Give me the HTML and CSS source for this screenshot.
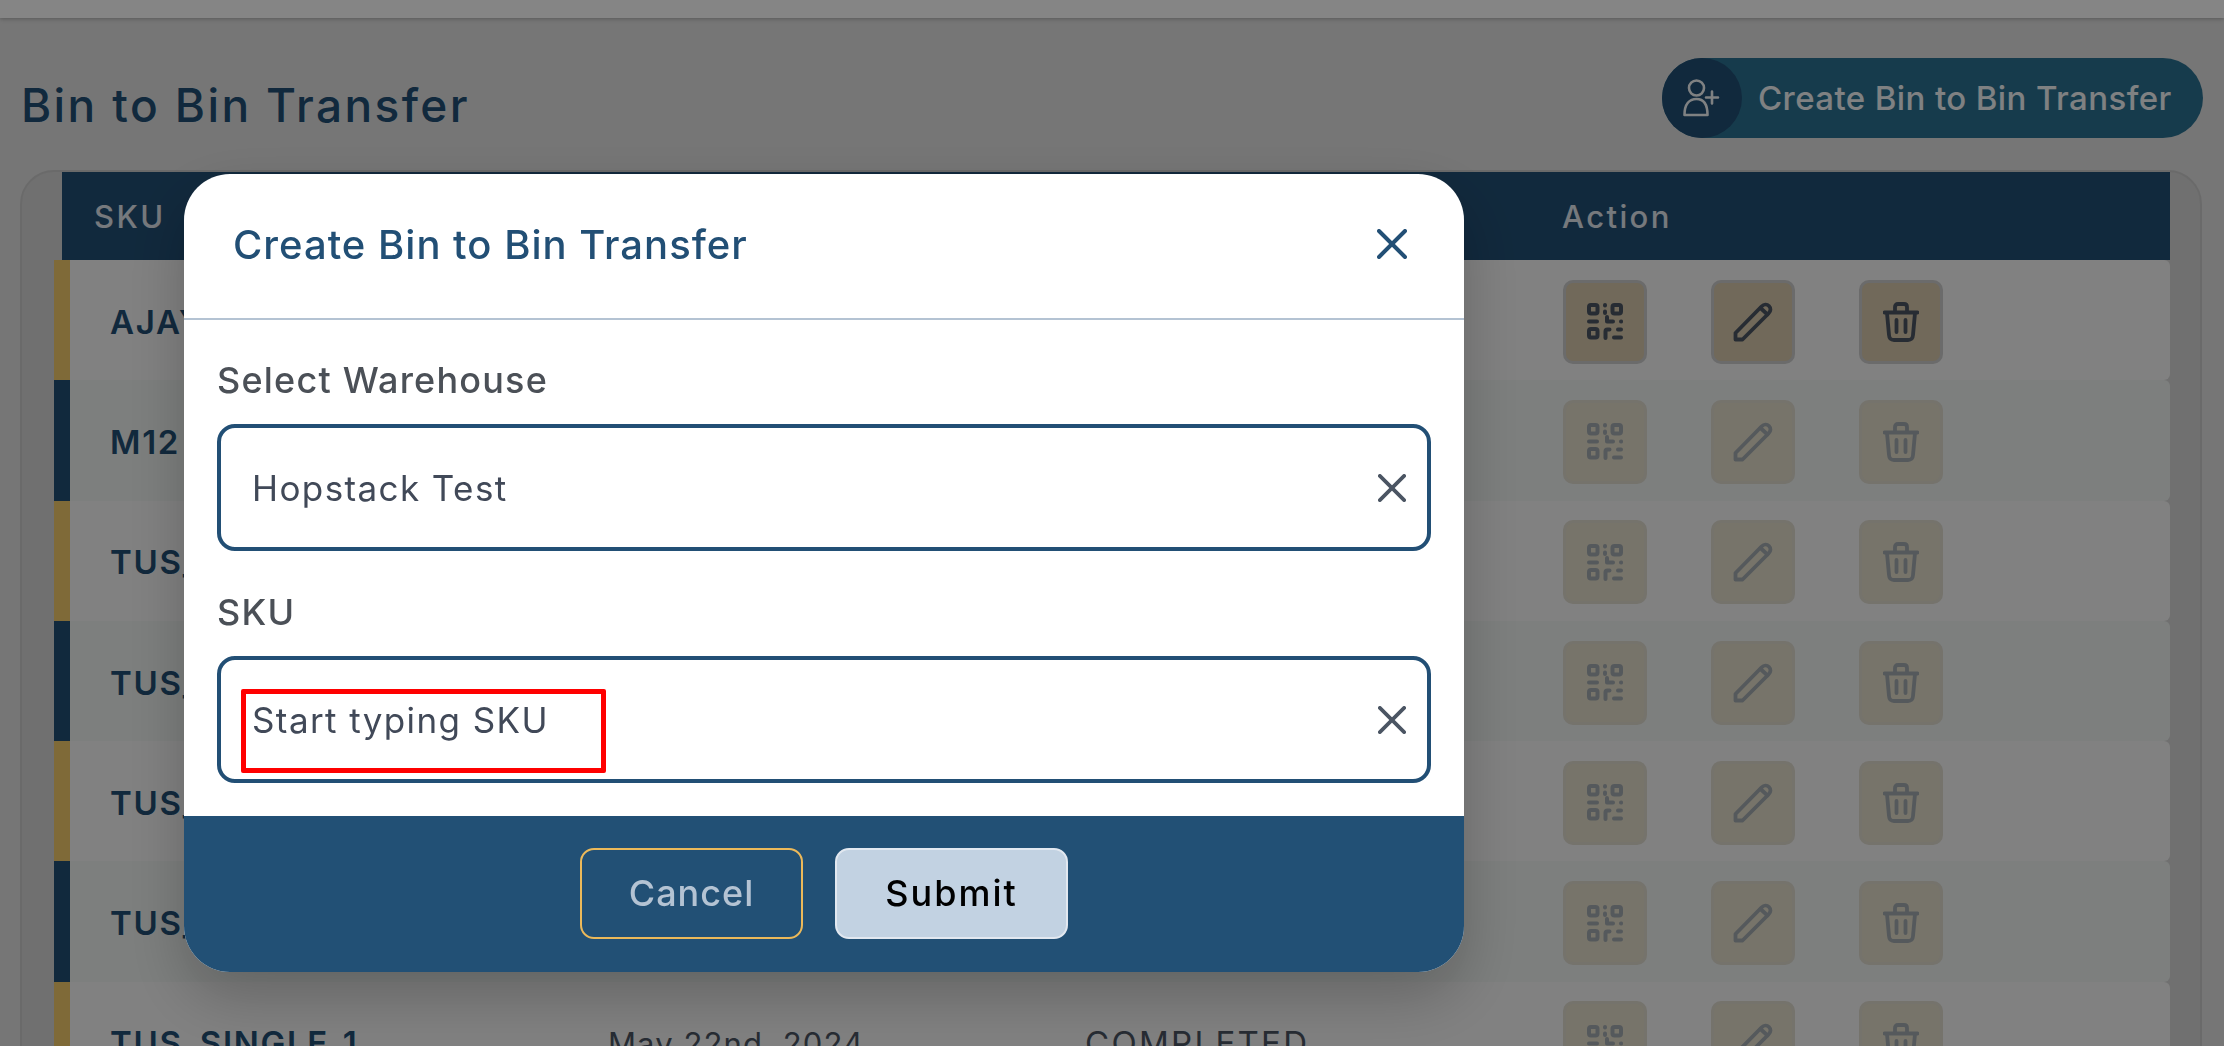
FILE: index.html
```html
<!DOCTYPE html>
<html>
<head>
<title>Bin to Bin Transfer</title>
<meta charset="UTF-8"/>
<link rel="stylesheet" href="styles.css">
</head>
<body>
<svg class="defs" width="0" height="0">
  <symbol id="i-qr" viewBox="0 0 36 37">
    <g fill="none" stroke="currentColor" stroke-width="4" stroke-linecap="round" stroke-linejoin="round">
      <rect x="2" y="2" width="8.5" height="8.5" rx="2"/>
      <rect x="25.5" y="2" width="8.5" height="8.5" rx="2"/>
      <rect x="2" y="26" width="8.5" height="8.5" rx="2"/>
      <path d="M18 2v.5M18 8.5v1.5M2 18.500h8M20 14v4.500h6M34 18.500h.1M18.500 35v-6.500q0-2 2-2h2M31 26.500h3M27 34.500h7"/>
    </g>
  </symbol>
  <symbol id="i-pencil" viewBox="0 0 40 40">
    <g fill="none" stroke="currentColor" stroke-width="3.800" stroke-linejoin="round" stroke-linecap="round">
      <path d="M2.500 37.500v-6.500L28.500 4.500c2.500-2.500 5.500-2.500 7.500-.5s2 5-.5 7.500L9.500 37.500z"/>
      <path d="M27.500 6l7 6.500"/>
    </g>
  </symbol>
  <symbol id="i-trash" viewBox="0 0 36 40">
    <g fill="none" stroke="currentColor" stroke-width="3.800" stroke-linejoin="round" stroke-linecap="round">
      <path d="M1.500 10.500h33M12 10V5q0-3 3-3h6q3 0 3 3v5M4 11l2 22q.3 5 5 5h14q4.700 0 5-5l2-22M13.500 18v12M22.500 18v12"/>
    </g>
  </symbol>
  <symbol id="i-x" viewBox="0 0 30 30">
    <path d="M2 2l26 26M28 2L2 28" fill="none" stroke="currentColor" stroke-width="4" stroke-linecap="round"/>
  </symbol>
</svg>

<div class="page">
  <div class="topbar"></div>
  <div class="page-head">
    <h1 class="page-title">Bin to Bin Transfer</h1>
    <button class="create-btn">
      <span class="create-icon">
        <svg width="38" height="38" viewBox="0 0 38 38" fill="none" stroke="currentColor" stroke-width="2.600" stroke-linejoin="round" stroke-linecap="round">
          <circle cx="13.500" cy="9" r="7.500"/>
          <path d="M1.500 36c0-11 5-16 12-16s11 5 11 16zM29 12.500v12M23 18.500h12"/>
        </svg>
      </span>
      <span class="create-label">Create Bin to Bin Transfer</span>
    </button>
  </div>

  <div class="table-wrap">
    <div class="table-head cols">
      <div>SKU</div>
      <div></div>
      <div></div>
      <div>Action</div>
    </div>

    <div class="row row-gold row-active cols">
      <div class="sku">AJAY_SKU_1</div>
      <div></div>
      <div></div>
      <div class="actions">
        <span class="act"><svg width="36" height="37"><use href="#i-qr"/></svg></span>
        <span class="act"><svg width="40" height="40"><use href="#i-pencil"/></svg></span>
        <span class="act"><svg width="36" height="40"><use href="#i-trash"/></svg></span>
      </div>
    </div>
    <div class="row row-navy row-alt cols">
      <div class="sku">M12</div>
      <div></div>
      <div></div>
      <div class="actions">
        <span class="act"><svg width="36" height="37"><use href="#i-qr"/></svg></span>
        <span class="act"><svg width="40" height="40"><use href="#i-pencil"/></svg></span>
        <span class="act"><svg width="36" height="40"><use href="#i-trash"/></svg></span>
      </div>
    </div>
    <div class="row row-gold cols">
      <div class="sku">TUS_SINGLE_1</div>
      <div></div>
      <div></div>
      <div class="actions">
        <span class="act"><svg width="36" height="37"><use href="#i-qr"/></svg></span>
        <span class="act"><svg width="40" height="40"><use href="#i-pencil"/></svg></span>
        <span class="act"><svg width="36" height="40"><use href="#i-trash"/></svg></span>
      </div>
    </div>
    <div class="row row-navy row-alt cols">
      <div class="sku">TUS_SINGLE_1</div>
      <div></div>
      <div></div>
      <div class="actions">
        <span class="act"><svg width="36" height="37"><use href="#i-qr"/></svg></span>
        <span class="act"><svg width="40" height="40"><use href="#i-pencil"/></svg></span>
        <span class="act"><svg width="36" height="40"><use href="#i-trash"/></svg></span>
      </div>
    </div>
    <div class="row row-gold cols">
      <div class="sku">TUS_SINGLE_1</div>
      <div></div>
      <div></div>
      <div class="actions">
        <span class="act"><svg width="36" height="37"><use href="#i-qr"/></svg></span>
        <span class="act"><svg width="40" height="40"><use href="#i-pencil"/></svg></span>
        <span class="act"><svg width="36" height="40"><use href="#i-trash"/></svg></span>
      </div>
    </div>
    <div class="row row-navy row-alt cols">
      <div class="sku">TUS_SINGLE_1</div>
      <div></div>
      <div></div>
      <div class="actions">
        <span class="act"><svg width="36" height="37"><use href="#i-qr"/></svg></span>
        <span class="act"><svg width="40" height="40"><use href="#i-pencil"/></svg></span>
        <span class="act"><svg width="36" height="40"><use href="#i-trash"/></svg></span>
      </div>
    </div>
    <div class="row row-gold cols">
      <div class="sku">TUS_SINGLE_1</div>
      <div class="cell">May 22nd, 2024</div>
      <div class="cell cell-status">COMPLETED</div>
      <div class="actions">
        <span class="act"><svg width="36" height="37"><use href="#i-qr"/></svg></span>
        <span class="act"><svg width="40" height="40"><use href="#i-pencil"/></svg></span>
        <span class="act"><svg width="36" height="40"><use href="#i-trash"/></svg></span>
      </div>
    </div>
  </div>
</div>

<div class="overlay">
  <div class="modal">
    <div class="modal-head">
      <h2 class="modal-title">Create Bin to Bin Transfer</h2>
      <svg class="modal-close" width="30" height="30"><use href="#i-x"/></svg>
    </div>
    <div class="modal-body">
      <div class="field">
        <div class="field-label">Select Warehouse</div>
        <div class="select">
          <span class="select-text">Hopstack Test</span>
          <svg class="select-clear" width="28" height="28"><use href="#i-x"/></svg>
        </div>
      </div>
      <div class="field">
        <div class="field-label">SKU</div>
        <div class="select">
          <span class="select-text">Start typing SKU</span>
          <svg class="select-clear" width="28" height="28"><use href="#i-x"/></svg>
          <div class="red-box"></div>
        </div>
      </div>
    </div>
    <div class="modal-foot">
      <button class="btn btn-cancel">Cancel</button>
      <button class="btn btn-submit">Submit</button>
    </div>
  </div>
</div>
</body>
</html>
```

FILE: styles.css
```css
* {
  margin: 0;
  padding: 0;
  box-sizing: border-box;
}

html, body {
  height: 100%;
  overflow: hidden;
}

body {
  background: #e2e2e2;
  font-family: Inter, "Noto Sans", sans-serif;
}

.defs {
  position: absolute;
}

button {
  font-family: inherit;
  border: none;
}

.page {
  height: 1046px;
  overflow: hidden;
}

.topbar {
  height: 18px;
  background: #fff;
  box-shadow: 0 1px 4px rgba(0, 0, 0, 0.25);
}

.page-head {
  display: flex;
  justify-content: space-between;
  align-items: center;
  height: 120px;
  padding: 40px 21px 0 21px;
}

.page-title {
  padding-top: 14px;
  font-size: 46px;
  font-weight: 500;
  color: #224f75;
  letter-spacing: 2.4px;
}

.create-btn {
  display: flex;
  align-items: center;
  width: 541px;
  height: 80px;
  border-radius: 40px;
  background: #2b7292;
  color: #f4f7fa;
  font-size: 33px;
  font-weight: 500;
  letter-spacing: 0.4px;
}

.create-icon {
  display: flex;
  align-items: center;
  justify-content: center;
  width: 80px;
  height: 80px;
  border-radius: 50%;
  background: #224f75;
  margin-right: 16px;
}

.table-wrap {
  margin: 32px 22px 0 20px;
  padding: 0 30px 0 32px;
  height: 900px;
  border: 2px solid #cccccc;
  border-radius: 34px 34px 0 0;
  background: #d6d6d6;
}

.cols {
  display: grid;
  grid-template-columns: 514px 477px 477px 1fr;
  align-items: center;
}

.table-head {
  height: 88px;
  margin-left: 8px;
  padding-left: 32px;
  background: #224f75;
  color: #e2e8f0;
  font-size: 31px;
  font-weight: 500;
  letter-spacing: 2.400px;
}

.row {
  height: 120.3px;
  padding: 3px 0 0 40px;
  border-left: 16px solid;
  border-radius: 0 6px 6px 0;
  background: #f7f7f7;
  grid-template-columns: 498px 477px 478px 1fr;
}

.row-alt {
  background: #eff3f1;
}

.row-gold {
  border-left-color: #f4cb6b;
}

.row-navy {
  border-left-color: #224f75;
}

.sku {
  font-size: 33px;
  font-weight: 600;
  color: #224f75;
  letter-spacing: 1.7px;
}

.cell {
  font-size: 31px;
  color: #4b5563;
  letter-spacing: 1.1px;
}

.cell-status {
  font-size: 33px;
  letter-spacing: 2.3px;
}

.actions {
  display: flex;
  gap: 64px;
}

.act {
  display: flex;
  align-items: center;
  justify-content: center;
  width: 84px;
  height: 84px;
  border-radius: 10px;
  border: 3px solid #e0dcd0;
  background: #e4decb;
  color: #a3abb1;
}

.row-active .act {
  border-color: #cdcdcd;
  background: #d8c9ac;
  color: #4b5563;
}

.overlay {
  position: fixed;
  top: 0;
  left: 0;
  right: 0;
  bottom: 0;
  padding: 174px 0 0 184px;
  background: rgba(0, 0, 0, 0.48);
}

.modal {
  width: 1280px;
  height: 798px;
  border-radius: 46px;
  overflow: hidden;
  background: #fff;
  box-shadow: 0 25px 60px rgba(0, 0, 0, 0.22);
  display: flex;
  flex-direction: column;
}

.modal-head {
  display: flex;
  align-items: center;
  justify-content: space-between;
  height: 146px;
  padding: 0 57px 4px 49px;
  border-bottom: 2px solid #b4c3d3;
}

.modal-title {
  font-size: 40px;
  font-weight: 500;
  color: #224f75;
  letter-spacing: 1px;
}

.modal-close {
  color: #224f75;
}

.modal-body {
  display: flex;
  flex-direction: column;
  gap: 41px;
  height: 496px;
  padding: 40px 33px 0;
}

.field-label {
  height: 40px;
  line-height: 40px;
  margin-bottom: 24px;
  font-size: 36px;
  font-weight: 500;
  color: #4b5057;
  letter-spacing: 1.2px;
}

.select {
  position: relative;
  display: flex;
  align-items: center;
  justify-content: space-between;
  height: 127px;
  padding: 0 21px 0 31px;
  border: 4px solid #224f75;
  border-radius: 18px;
}

.select-text {
  font-size: 35px;
  color: #414958;
  letter-spacing: 1.4px;
}

.select-clear {
  color: #4b5563;
}

.red-box {
  position: absolute;
  left: 20px;
  top: 29px;
  width: 365px;
  height: 84px;
  border: 5px solid #f00;
  border-radius: 2px;
}

.modal-foot {
  display: flex;
  justify-content: center;
  align-items: center;
  gap: 32px;
  height: 156px;
  padding-bottom: 2px;
  background: #225075;
}

.btn {
  height: 91px;
  border-radius: 14px;
  font-size: 36px;
  font-weight: 500;
  letter-spacing: 1px;
}

.btn-cancel {
  width: 223px;
  background: transparent;
  border: 2px solid #ecb95a;
  color: #b4c3d3;
}

.btn-submit {
  width: 233px;
  background: #c2d2e2;
  border: 2px solid #e2e8f0;
  color: #000;
  letter-spacing: 2px;
}
```
